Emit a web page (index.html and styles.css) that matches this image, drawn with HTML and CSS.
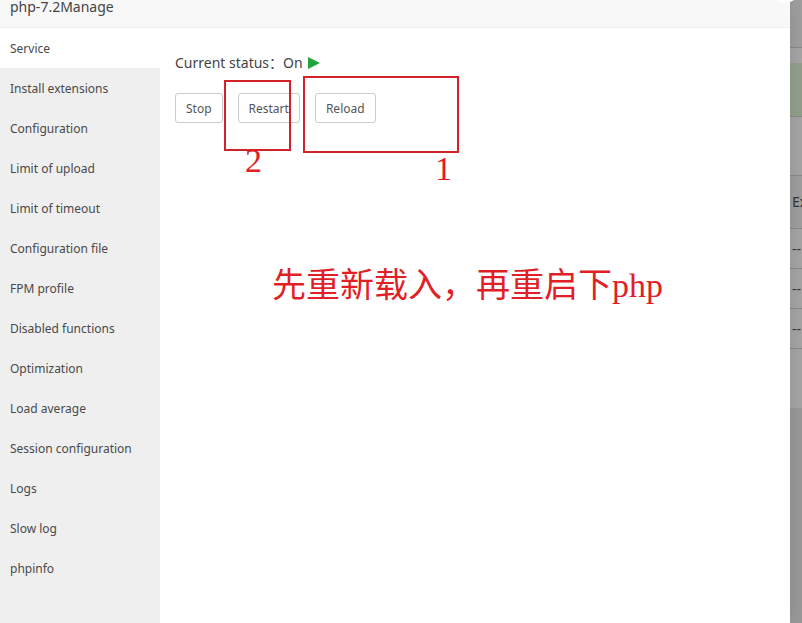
FILE: index.html
```html
<!DOCTYPE html>
<html lang="en">
<head>
<meta charset="utf-8">
<title>php-7.2Manage</title>
<link rel="stylesheet" href="styles.css">
</head>
<body>
<section class="dialog">
  <header class="dialog-header">php-7.2Manage</header>
  <div class="dialog-body">
    <nav class="menu">
      <a class="menu-item active" href="#service">Service</a>
      <a class="menu-item" href="#extensions">Install extensions</a>
      <a class="menu-item" href="#configuration">Configuration</a>
      <a class="menu-item" href="#upload">Limit of upload</a>
      <a class="menu-item" href="#timeout">Limit of timeout</a>
      <a class="menu-item" href="#file">Configuration file</a>
      <a class="menu-item" href="#fpm">FPM profile</a>
      <a class="menu-item" href="#functions">Disabled functions</a>
      <a class="menu-item" href="#optimization">Optimization</a>
      <a class="menu-item" href="#load">Load average</a>
      <a class="menu-item" href="#session">Session configuration</a>
      <a class="menu-item" href="#logs">Logs</a>
      <a class="menu-item" href="#slow">Slow log</a>
      <a class="menu-item" href="#phpinfo">phpinfo</a>
    </nav>
    <main class="content">
      <p class="status"><span>Current status：</span><span>On</span>
        <svg class="play" viewBox="0 0 12 12" aria-hidden="true"><path d="M0 0L12 6L0 12Z"/></svg>
      </p>
      <div class="actions">
        <button type="button">Stop</button>
        <button type="button">Restart</button>
        <button type="button">Reload</button>
      </div>
      <div class="mark mark-restart"></div>
      <div class="mark mark-reload"></div>
      <span class="note note-two">2</span>
      <span class="note note-one">1</span>
      <span class="note note-text">先重新载入，再重启下php</span>
    </main>
  </div>
  <span class="corner"></span>
</section>
<aside class="backdrop">
  <div class="row row-top"></div>
  <div class="row row-gap"></div>
  <div class="row row-green"></div>
  <div class="row row-space"></div>
  <div class="row row-head">Ex</div>
  <div class="row row-cell">--</div>
  <div class="row row-cell">--</div>
  <div class="row row-cell">--</div>
  <div class="row row-foot"></div>
</aside>
</body>
</html>
```
FILE: styles.css
```css
* { box-sizing: border-box; }

body {
  display: flex;
  min-height: 100vh;
  margin: 0;
  overflow: hidden;
  background: #999;
  color: #444;
  font: 12px/20px "Noto Sans", "Noto Sans CJK SC", sans-serif;
}

.dialog {
  position: relative;
  z-index: 1;
  display: flex;
  flex: 1;
  flex-direction: column;
  background: #fff;
  box-shadow: 0 0 20px rgba(0, 0, 0, 0.12);
}

.dialog-header {
  padding: 0 10px 13px;
  border-bottom: 1px solid #eee;
  background: #f8f8f8;
  color: #444;
  font-size: 14px;
  line-height: 14px;
}

.dialog-body {
  display: flex;
  flex: 1;
}

.menu {
  width: 160px;
  background: #efefef;
}

.menu-item {
  display: block;
  padding: 11px 10px 9px;
  color: #4a4a4a;
  text-decoration: none;
}

.menu-item.active { background: #fff; }

.content {
  position: relative;
  flex: 1;
  padding: 23px 15px;
}

.status {
  display: flex;
  align-items: center;
  margin: 0 0 18px;
  font-size: 14px;
  line-height: 24px;
}

.play {
  width: 12px;
  height: 12px;
  margin-left: 5px;
  fill: #20a53a;
}

.actions {
  display: flex;
  gap: 15px;
}

button {
  height: 30px;
  padding: 1px 10px 0;
  border: 1px solid #ccc;
  border-radius: 3px;
  background: #fff;
  color: #555;
  font: inherit;
}

.mark {
  position: absolute;
  border: 2px solid #d2232a;
}

.mark-restart {
  top: 52px;
  left: 64px;
  width: 67px;
  height: 71px;
}

.mark-reload {
  top: 48px;
  left: 143px;
  width: 156px;
  height: 77px;
}

.note {
  position: absolute;
  color: #e01f26;
  font: 34px/40px "Liberation Serif", "Noto Sans CJK SC", serif;
  white-space: nowrap;
}

.note-two { top: 113px; left: 85px; }
.note-one { top: 121px; left: 275px; }
.note-text { top: 238px; left: 112px; }

.corner {
  position: absolute;
  top: -27px;
  right: -10px;
  width: 30px;
  height: 30px;
  border-radius: 50%;
  background: #fff;
}

.backdrop {
  width: 12px;
  color: #333;
  font-size: 14px;
}

.row {
  overflow: hidden;
  padding-left: 2px;
  border-bottom: 1px solid #8a8a8a;
  background: #a5a5a5;
}

.row-top { height: 48px; background: #9f9f9f; }
.row-gap { height: 15px; border: 0; }
.row-green { height: 54px; background: #92a08b; }
.row-space { height: 59px; }
.row-head { height: 53px; background: #9f9f9f; line-height: 52px; }
.row-cell { height: 40px; line-height: 40px; }
.row-foot { height: 59px; border: 0; }
```
